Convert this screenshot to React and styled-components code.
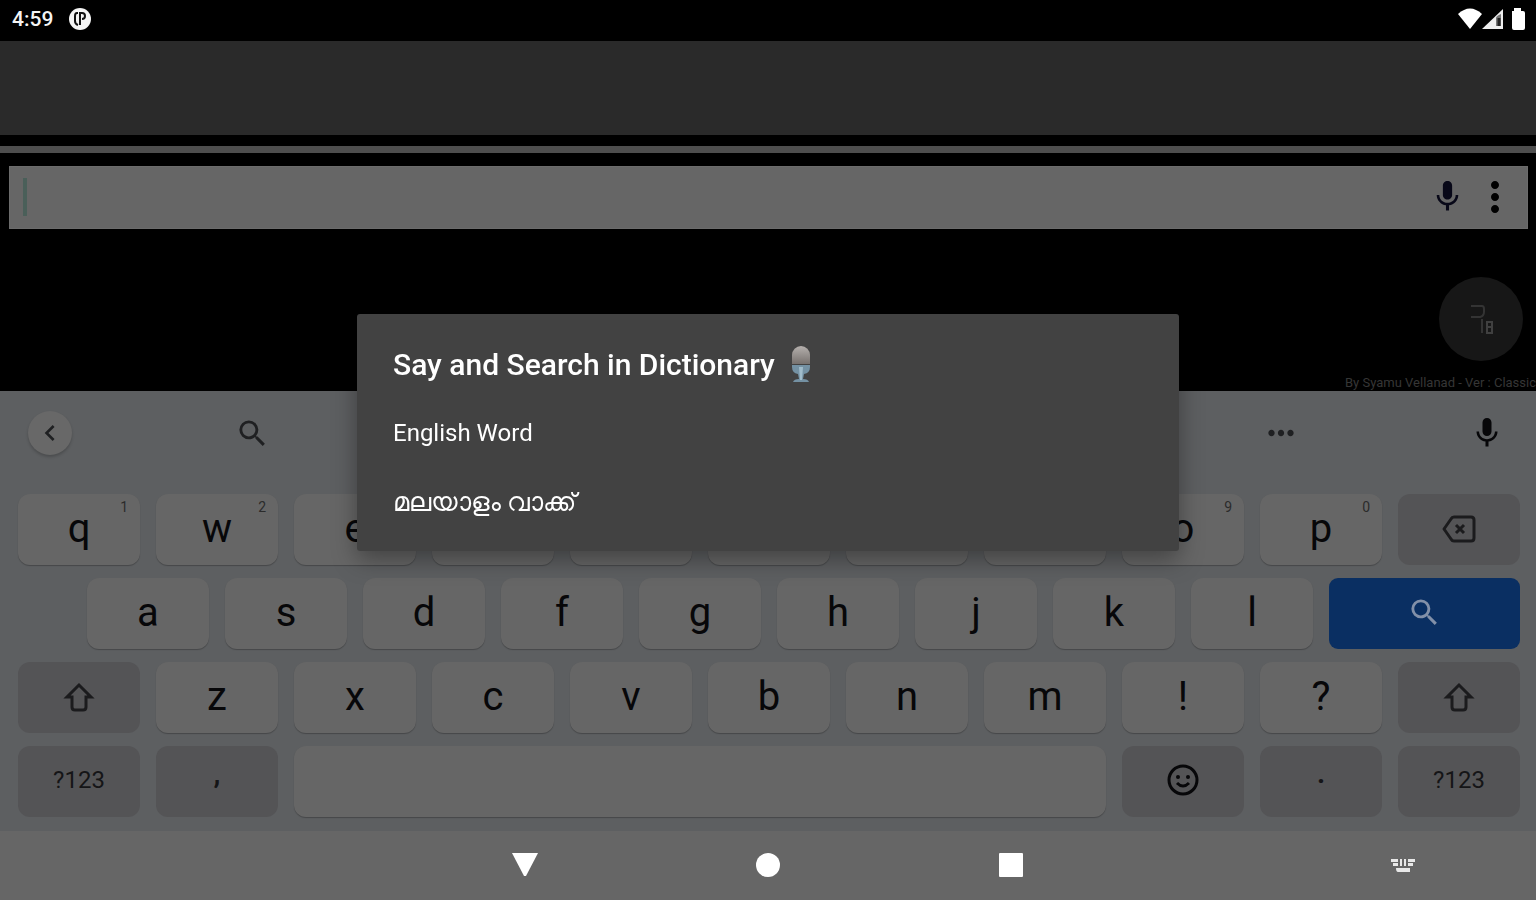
import React from 'react'
import styled, { createGlobalStyle, css } from 'styled-components'
import {
  MdMic,
  MdMoreHoriz,
  MdMoreVert,
  MdSearch,
  MdChevronLeft,
  MdSettings,
  MdTranslate,
  MdPalette,
  MdEmojiEmotions
} from 'react-icons/md'

const colorKeyboard = '#5d5f61'
const colorKey = '#666666'
const colorKeySpecial = '#545456'
const colorInk = '#070709'
const colorIcon = '#1f2022'

const GlobalStyle = createGlobalStyle`
  * {
    box-sizing: border-box;
  }

  body {
    margin: 0;
    background: #000;
    font-family: Roboto, "Noto Sans", sans-serif;
  }

  button {
    border: 0;
    padding: 0;
    background: none;
    font: inherit;
    color: inherit;
    display: flex;
    align-items: center;
    justify-content: center;
  }

  svg {
    display: block;
  }
`

const Screen = styled.div`
  min-height: 100vh;
  display: flex;
  flex-direction: column;
`

const StatusBar = styled.header`
  height: 41px;
  padding: 0 11px 4px 12px;
  display: flex;
  align-items: center;
  color: #f4f4f4;
  font-size: 21px;
  font-weight: 500;
`

const StatusIcons = styled.div`
  display: flex;
  align-items: center;
  margin-left: ${props => props.$end ? 'auto' : '16px'};
`

const AdBanner = styled.div`
  height: 94px;
  background: #2a2a2a;
`

const Divider = styled.div`
  height: 7px;
  margin: 11px 0 13px;
  background: #4e4e4e;
`

const SearchBar = styled.form`
  height: 63px;
  margin: 0 8px 0 9px;
  padding: 0 8px 2px 13px;
  display: flex;
  align-items: center;
  background: #666;
  border: 1px solid #6c6c6c;
`

const Caret = styled.span`
  width: 4px;
  height: 38px;
  background: #4a5f59;
`

const SearchInput = styled.input`
  flex: 1;
  min-width: 0;
  height: 100%;
  border: 0;
  outline: 0;
  background: none;
  font: inherit;
  font-size: 24px;
  color: #000;
`

const BarButton = styled.button`
  width: 48px;
  height: 48px;
  color: ${props => props.$color};
`

const Results = styled.main`
  position: relative;
  flex: 1;
  min-height: 162px;
  display: flex;
  align-items: flex-end;
  justify-content: flex-end;
  overflow: hidden;
`

const Credit = styled.small`
  font-size: 13px;
  line-height: 16px;
  color: #363636;
  white-space: nowrap;
`

const FloatingButton = styled.button`
  position: absolute;
  right: 13px;
  top: 48px;
  width: 84px;
  height: 84px;
  border-radius: 50%;
  background: #171717;
`

const Keyboard = styled.section`
  padding: 0 16px 14px 18px;
  background: ${colorKeyboard};
`

const Suggestions = styled.div`
  height: 84px;
  margin-bottom: 19px;
  padding: 0 11px 0 10px;
  display: flex;
  align-items: center;
  color: ${colorIcon};
`

const Tools = styled.div`
  flex: 1;
  margin-left: 158px;
  display: flex;
  justify-content: space-between;
`

const ToolButton = styled.button`
  width: 44px;
  height: 44px;
  border-radius: 50%;
  ${props => props.$raised && css`
    background: #686868;
    box-shadow: 0 2px 3px rgba(0, 0, 0, 0.2);
  `}
  ${props => props.$dark && css`
    color: #070709;
  `}
`

const Keys = styled.div`
  display: grid;
  grid-template-columns: repeat(22, minmax(0, 1fr));
  grid-auto-rows: 71px;
  gap: 13px 16px;
`

const Key = styled.button`
  position: relative;
  grid-column: ${props => props.$start || 'auto'} / span ${props => props.$span || 2};
  border-radius: 12px;
  background: ${colorKey};
  box-shadow: 0 1px 1px rgba(0, 0, 0, 0.25);
  color: ${colorInk};
  font-size: 40px;
  line-height: 48px;
  padding-bottom: 2px;
`

const SpecialKey = styled(Key)`
  background: ${colorKeySpecial};
  box-shadow: none;
  color: #151517;
  font-size: 24px;
`

const BottomKey = styled(SpecialKey)`
  padding-bottom: 4px;
`

const PunctuationKey = styled(SpecialKey)`
  font-size: 28px;
  font-weight: 700;
  padding-bottom: 16px;
`

const EnterKey = styled(Key)`
  background: #0a2f62;
  border-radius: 9px;
  box-shadow: none;
  color: #8290a8;
`

const Hint = styled.span`
  position: absolute;
  top: 5px;
  right: 12px;
  font-size: 14px;
  line-height: 16px;
  color: #2b2b2b;
`

const NavBar = styled.nav`
  height: 70px;
  padding: 0 121px 2px;
  display: grid;
  grid-template-columns: 1fr auto 1fr;
  align-items: center;
  background: #666;
  color: #fff;
`

const NavButtons = styled.div`
  grid-column: 2;
  display: flex;
  gap: 195px;
`

const NavButton = styled.button`
  width: 48px;
  height: 48px;
`

const SwitchKeyboard = styled.button`
  justify-self: end;
  height: 48px;
`

const Overlay = styled.div`
  position: fixed;
  inset: 0;
  padding-bottom: 36px;
  display: flex;
  align-items: center;
  justify-content: center;
`

const Dialog = styled.div`
  width: 822px;
  max-width: 90%;
  padding: 16px 0 12px;
  background: #424242;
  border-radius: 3px;
  box-shadow: 0 8px 24px rgba(0, 0, 0, 0.36);
  color: #fff;
`

const DialogTitle = styled.h1`
  height: 69px;
  margin: 0;
  padding: 0 36px;
  display: flex;
  align-items: center;
  gap: 16px;
  font-size: 30px;
  font-weight: 500;
`

const Option = styled.button`
  && {
    width: 100%;
    height: 70px;
    padding: 0 36px 2px;
    justify-content: flex-start;
    font-size: ${props => props.lang === 'ml' ? '26px' : '24px'};
  }
`

const NotificationIcon = () => (
  <svg width="22" height="22" viewBox="0 0 22 22">
    <circle cx="11" cy="11" r="11" fill="#f4f4f4" />
    <path d="M9 5H8Q6 5 6 8v5q0 3 3 4M11 17V5h2q3 0 3 3t-3 3" fill="none" stroke="#111" strokeWidth="2" />
  </svg>
)

const WifiIcon = () => (
  <svg width="24" height="21" viewBox="0 0 24 21">
    <path d="M0 6Q12-5 24 6L12 21z" fill="#fff" />
  </svg>
)

const SignalIcon = () => (
  <svg width="22" height="20" viewBox="0 0 22 20">
    <path d="M21 0v20H0z" fill="#eee" />
    <path d="M14 17V9q0-2 5-4v12z" fill="#777" />
    <path d="M17 9v8" stroke="#222" strokeWidth="3" />
  </svg>
)

const BatteryIcon = () => (
  <svg width="21" height="22" viewBox="8 0 21 22">
    <path d="M16 3h2V0h7v3h2q2 0 2 2v15q0 2-2 2H18q-2 0-2-2z" fill="#fff" />
  </svg>
)

const BadgeIcon = () => (
  <svg width="26" height="34" viewBox="0 0 26 34" fill="none" stroke="#343434" strokeWidth="2">
    <path d="M3 4h11q2 0 2 3v3q0 4-4 5H3M14 17v14" />
    <path d="M19 20h5v11h-5zM19 25h5" stroke="#404040" />
  </svg>
)

const MicrophoneIcon = () => (
  <svg width="20" height="37" viewBox="0 0 20 37">
    <defs>
      <linearGradient id="micHead" x1="0" y1="0" x2="0" y2="1">
        <stop offset="0" stopColor="#b5b0ad" />
        <stop offset="1" stopColor="#77716e" />
      </linearGradient>
    </defs>
    <path d="M1 18V9a9 9 0 0 1 18 0v9z" fill="url(#micHead)" />
    <path d="M1 19h18v2q0 6-6 7l-1 5q5 0 6 3H2q1-3 6-3l-1-5q-6-1-6-7z" fill="#7491a3" />
    <path d="M8 21h4l-1 13H9z" fill="#a0bccb" />
  </svg>
)

const BackspaceIcon = () => (
  <svg width="34" height="28" viewBox="0 0 34 28" fill="none" stroke="#1b1b1d" strokeWidth="3" strokeLinejoin="round">
    <path d="M12 2h17q3 0 3 3v18q0 3-3 3H12q-2 0-3-2L2 14l7-10q1-2 3-2z" />
    <path d="M14 10l8 8M22 10l-8 8" />
  </svg>
)

const ShiftIcon = () => (
  <svg width="32" height="30" viewBox="0 0 32 30" fill="none" stroke="#1b1b1d" strokeWidth="3">
    <path d="M16 3L4 15h5v10q0 3 3 3h8q3 0 3-3V15h5z" />
  </svg>
)

const SmileyIcon = () => (
  <svg width="32" height="32" viewBox="0 0 32 32" fill={colorInk}>
    <circle cx="16" cy="16" r="14" fill="none" stroke={colorInk} strokeWidth="3" />
    <circle cx="11" cy="13" r="2" />
    <circle cx="21" cy="13" r="2" />
    <path d="M10 19q6 6 12 0" fill="none" stroke={colorInk} strokeWidth="3" />
  </svg>
)

const KeyboardIcon = () => (
  <svg width="24" height="14" viewBox="0 0 24 14" fill="#e8e8e8">
    <path d="M0 1h7v3H0zM9 1h2v7H9zM13 1h2v7h-2zM17 1h7v3h-7zM2 5h5v3H2zM17 5h5v3h-5zM5 10h14v4H7q-2 0-2-4z" />
  </svg>
)

const topRow = ['q', 'w', 'e', 'r', 't', 'y', 'u', 'i', 'o', 'p']
const homeRow = ['a', 's', 'd', 'f', 'g', 'h', 'j', 'k', 'l']
const bottomRow = ['z', 'x', 'c', 'v', 'b', 'n', 'm', '!', '?']
const hints = { q: 1, w: 2, o: 9, p: 0 }

class App extends React.Component {
  render () {
    return (
      <Screen>
        <GlobalStyle />
        <StatusBar>
          <span>4:59</span>
          <StatusIcons><NotificationIcon /></StatusIcons>
          <StatusIcons $end>
            <WifiIcon />
            <SignalIcon />
            <BatteryIcon />
          </StatusIcons>
        </StatusBar>
        <AdBanner />
        <Divider />
        <SearchBar onSubmit={e => e.preventDefault()}>
          <Caret />
          <SearchInput type="text" aria-label="Search" />
          <BarButton type="button" aria-label="Voice search" $color="#080818"><MdMic size={37} /></BarButton>
          <BarButton type="button" aria-label="Menu" $color="#000"><MdMoreVert size={48} /></BarButton>
        </SearchBar>
        <Results>
          <FloatingButton aria-label="Switch language"><BadgeIcon /></FloatingButton>
          <Credit>By Syamu Vellanad - Ver : Classic</Credit>
        </Results>

        <Keyboard>
          <Suggestions>
            <ToolButton $raised aria-label="Back"><MdChevronLeft size={32} /></ToolButton>
            <Tools>
              <ToolButton aria-label="Search"><MdSearch size={35} /></ToolButton>
              <ToolButton aria-label="Emoji"><MdEmojiEmotions size={32} /></ToolButton>
              <ToolButton aria-label="Settings"><MdSettings size={32} /></ToolButton>
              <ToolButton aria-label="Translate"><MdTranslate size={32} /></ToolButton>
              <ToolButton aria-label="Theme"><MdPalette size={32} /></ToolButton>
              <ToolButton aria-label="More"><MdMoreHoriz size={38} /></ToolButton>
              <ToolButton $dark aria-label="Voice input"><MdMic size={36} /></ToolButton>
            </Tools>
          </Suggestions>
          <Keys>
            {topRow.map(letter => (
              <Key key={letter}>
                {letter}
                {letter in hints && <Hint>{hints[letter]}</Hint>}
              </Key>
            ))}
            <SpecialKey aria-label="Backspace"><BackspaceIcon /></SpecialKey>

            {homeRow.map((letter, i) => (
              <Key key={letter} $start={i === 0 ? 2 : undefined}>{letter}</Key>
            ))}
            <EnterKey $span={3} aria-label="Enter"><MdSearch size={35} /></EnterKey>

            <SpecialKey aria-label="Shift"><ShiftIcon /></SpecialKey>
            {bottomRow.map(letter => <Key key={letter}>{letter}</Key>)}
            <SpecialKey aria-label="Right shift"><ShiftIcon /></SpecialKey>

            <BottomKey>?123</BottomKey>
            <PunctuationKey>,</PunctuationKey>
            <Key $span={12} aria-label="Space" />
            <BottomKey aria-label="Emoji keyboard"><SmileyIcon /></BottomKey>
            <PunctuationKey>.</PunctuationKey>
            <BottomKey>?123</BottomKey>
          </Keys>
        </Keyboard>

        <NavBar>
          <NavButtons>
            <NavButton aria-label="Hide keyboard">
              <svg width="28" height="24" viewBox="0 0 28 24"><path d="M1 0h26L15 23h-2z" fill="currentColor" /></svg>
            </NavButton>
            <NavButton aria-label="Home">
              <svg width="24" height="24" viewBox="0 0 24 24"><circle cx="12" cy="12" r="12" fill="currentColor" /></svg>
            </NavButton>
            <NavButton aria-label="Recent apps">
              <svg width="24" height="24" viewBox="0 0 24 24"><rect width="24" height="24" rx="1" fill="currentColor" /></svg>
            </NavButton>
          </NavButtons>
          <SwitchKeyboard aria-label="Switch keyboard"><KeyboardIcon /></SwitchKeyboard>
        </NavBar>

        <Overlay>
          <Dialog role="dialog" aria-labelledby="dialog-title">
            <DialogTitle id="dialog-title">
              Say and Search in Dictionary
              <MicrophoneIcon />
            </DialogTitle>
            <Option>English Word</Option>
            <Option lang="ml">മലയാളം വാക്ക്</Option>
          </Dialog>
        </Overlay>
      </Screen>
    )
  }
}

export default App
